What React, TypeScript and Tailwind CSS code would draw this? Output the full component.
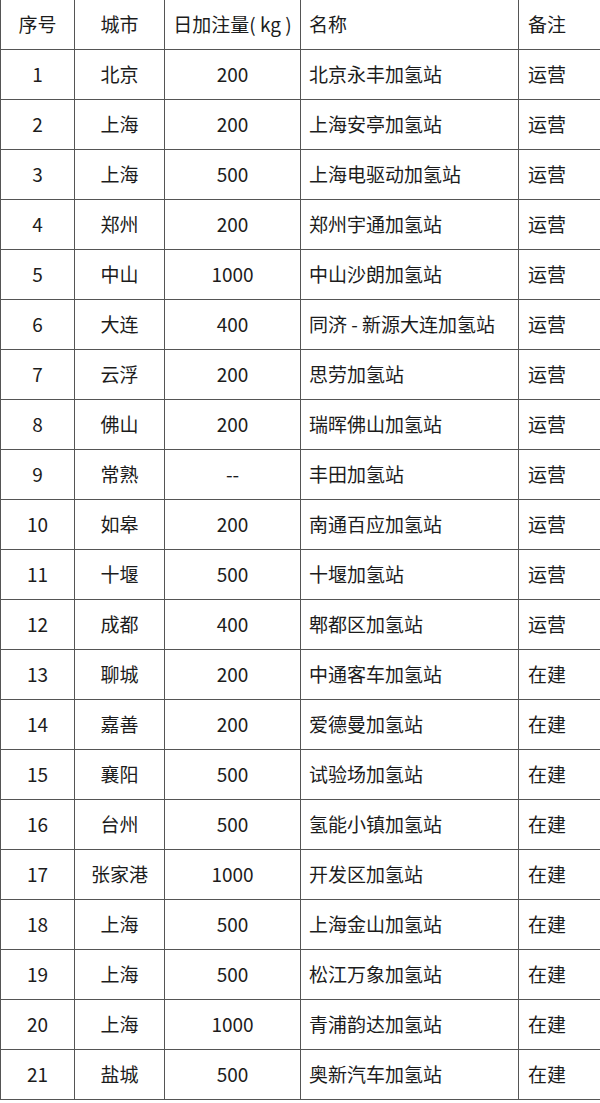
const rows: [string, string, string, string, string][] = [
  ['1', '北京', '200', '北京永丰加氢站', '运营'],
  ['2', '上海', '200', '上海安亭加氢站', '运营'],
  ['3', '上海', '500', '上海电驱动加氢站', '运营'],
  ['4', '郑州', '200', '郑州宇通加氢站', '运营'],
  ['5', '中山', '1000', '中山沙朗加氢站', '运营'],
  ['6', '大连', '400', '同济 - 新源大连加氢站', '运营'],
  ['7', '云浮', '200', '思劳加氢站', '运营'],
  ['8', '佛山', '200', '瑞晖佛山加氢站', '运营'],
  ['9', '常熟', '--', '丰田加氢站', '运营'],
  ['10', '如皋', '200', '南通百应加氢站', '运营'],
  ['11', '十堰', '500', '十堰加氢站', '运营'],
  ['12', '成都', '400', '郫都区加氢站', '运营'],
  ['13', '聊城', '200', '中通客车加氢站', '在建'],
  ['14', '嘉善', '200', '爱德曼加氢站', '在建'],
  ['15', '襄阳', '500', '试验场加氢站', '在建'],
  ['16', '台州', '500', '氢能小镇加氢站', '在建'],
  ['17', '张家港', '1000', '开发区加氢站', '在建'],
  ['18', '上海', '500', '上海金山加氢站', '在建'],
  ['19', '上海', '500', '松江万象加氢站', '在建'],
  ['20', '上海', '1000', '青浦韵达加氢站', '在建'],
  ['21', '盐城', '500', '奥新汽车加氢站', '在建'],
];

function Row({ cells }: { cells: [string, string, string, string, string] }) {
  return (
    <div className="grid grid-cols-[74px_90px_136px_218px_82px] h-[50px] border-b border-[#555]">
      <div className="flex items-center justify-center border-l border-[#555]">{cells[0]}</div>
      <div className="flex items-center justify-center border-l border-[#555]">{cells[1]}</div>
      <div className="flex items-center justify-center border-l border-[#555]">{cells[2]}</div>
      <div className="flex items-center pl-[8px] border-l border-[#555] whitespace-nowrap">{cells[3]}</div>
      <div className="flex items-center pl-[9px] border-l border-[#555]">{cells[4]}</div>
    </div>
  );
}

export default function App() {
  return (
    <div className="w-[600px] h-[1103px] bg-white text-[#1c1c1c] text-[19px] font-['Noto_Sans_CJK_SC',sans-serif] overflow-hidden">
      <Row cells={['序号', '城市', '日加注量( kg )', '名称', '备注']} />
      {rows.map((r) => (
        <Row key={r[0]} cells={r} />
      ))}
    </div>
  );
}
